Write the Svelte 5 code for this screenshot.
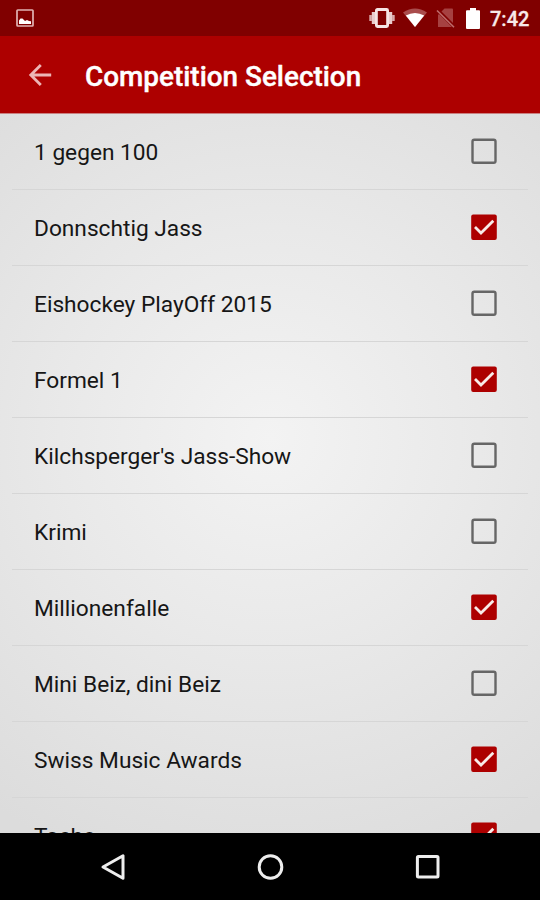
<script>
	let competitions = [
		{ name: '1 gegen 100', checked: false },
		{ name: 'Donnschtig Jass', checked: true },
		{ name: 'Eishockey PlayOff 2015', checked: false },
		{ name: 'Formel 1', checked: true },
		{ name: "Kilchsperger's Jass-Show", checked: false },
		{ name: 'Krimi', checked: false },
		{ name: 'Millionenfalle', checked: true },
		{ name: 'Mini Beiz, dini Beiz', checked: false },
		{ name: 'Swiss Music Awards', checked: true },
		{ name: 'Tacho', checked: true }
	];

	function toggle(i) {
		competitions[i].checked = !competitions[i].checked;
	}
</script>

<div class="screen">
	<div class="status">
		<svg class="picture" width="18" height="18" viewBox="0 0 18 18">
			<rect x="1" y="1" width="16" height="16" rx="0.8" fill="none" stroke="#e0b3b3" stroke-width="1.7" />
			<path d="M3 15v-3.5l1.5-2h2l2.5 2.5 2-1 2 1 2 .3V15z" fill="#fff" />
		</svg>
		<div class="tray">
			<svg width="28" height="20" viewBox="0 0 28 20">
				<rect x="8.4" y="1.5" width="11.2" height="17" rx="1" fill="none" stroke="#f5e4e4" stroke-width="2.8" />
				<path d="M5.4 4v12M22.6 4v12" stroke="#e9cccc" stroke-width="3.2" />
				<path d="M2.6 7v6M25.4 7v6" stroke="#d9aaaa" stroke-width="2.6" />
			</svg>
			<svg width="24" height="20" viewBox="0 0 24 20">
				<path d="M0 4.5Q12-3.5 24 4.5L12 19z" fill="#a94c4c" />
				<path d="M2.8 7.6Q12 2.6 21.2 7.6L12 19z" fill="#fff" />
			</svg>
			<svg width="20" height="20" viewBox="0 0 20 20">
				<path d="M8.5.5H16q1 0 1 1V19H2V7z" fill="#a64141" />
				<path d="M1 1.5L19 19.5" stroke="#800000" stroke-width="3.6" />
				<path d="M1 2.5L18 19.2" stroke="#bd6c6c" stroke-width="1.6" />
			</svg>
			<svg width="14" height="21" viewBox="0 0 14 21">
				<path d="M4 0h6v2.2h3q1 0 1 1V20q0 1-1 1H1q-1 0-1-1V3.2q0-1 1-1h3z" fill="#fff" />
			</svg>
			<span class="time">7:42</span>
		</div>
	</div>

	<header>
		<svg width="24" height="24" viewBox="0 0 24 24" fill="none" stroke="#edb5b5" stroke-width="2.8">
			<path d="M23.2 12H2.6M12.8 2l-10 10 10 10" />
		</svg>
		<h1>Competition Selection</h1>
	</header>

	<ul>
		{#each competitions as competition, i}
			<li>
				<button on:click={() => toggle(i)}>
					<span class="name">{competition.name}</span>
					<svg class="box" width="26" height="26" viewBox="0 0 26 26">
						{#if competition.checked}
							<rect x="0.2" y="0.5" width="25.6" height="25.5" rx="2" fill="#ad0000" />
							<path d="M4 13.1l6 6L22.3 6.8" fill="none" stroke="#f8ebe8" stroke-width="2.8" />
						{:else}
							<rect x="1.5" y="1.8" width="23" height="23" rx="1.8" fill="none" stroke="#666" stroke-width="2.4" />
						{/if}
					</svg>
				</button>
			</li>
		{/each}
	</ul>

	<nav>
		<svg width="28" height="28" viewBox="0 0 28 28">
			<path d="M24 2.7v22.6L4 14z" />
		</svg>
		<svg width="28" height="28" viewBox="0 0 28 28">
			<circle cx="13.5" cy="14" r="11.3" />
		</svg>
		<svg width="28" height="28" viewBox="0 0 28 28">
			<rect x="3.4" y="3.5" width="20.6" height="20.6" rx="1" />
		</svg>
	</nav>
</div>

<style>
	:global(body) {
		margin: 0;
	}

	.screen {
		width: 540px;
		height: 900px;
		display: flex;
		flex-direction: column;
		overflow: hidden;
		font-family: Roboto, 'Liberation Sans', sans-serif;
		background: #000;
	}

	.status {
		height: 36px;
		flex: none;
		box-sizing: border-box;
		padding: 0 10px 0 16px;
		display: flex;
		align-items: center;
		justify-content: space-between;
		background: #800000;
	}

	.tray {
		display: flex;
		align-items: center;
	}

	.tray svg + svg {
		margin-left: 7px;
	}

	.tray svg:nth-child(3) {
		margin-left: 9px;
	}

	.tray svg:nth-child(4) {
		margin-left: 10px;
	}

	.time {
		width: 40px;
		margin: 2px 0 0 10px;
		font-size: 20px;
		font-weight: 500;
		line-height: 24px;
		white-space: nowrap;
		color: #f8eaea;
		-webkit-text-stroke: 0.3px #f8eaea;
	}

	header {
		height: 78px;
		flex: none;
		box-sizing: border-box;
		padding: 1px 28px 0;
		display: flex;
		align-items: center;
		background: #ad0000;
		border-bottom: 1px solid #c98080;
	}

	h1 {
		margin: 3px 0 0 33px;
		font-size: 27.9px;
		font-weight: 500;
		line-height: 36px;
		white-space: nowrap;
		color: #fff;
		-webkit-text-stroke: 0.4px #fff;
	}

	ul {
		height: 719px;
		flex: none;
		margin: 0;
		padding: 0;
		overflow: hidden;
		list-style: none;
		background: radial-gradient(circle at 50% 45%, #f3f3f3 0, #e9e9e9 210px, #dcdcdc 460px);
	}

	li {
		height: 76px;
		box-sizing: border-box;
		margin: 0 12px;
		border-bottom: 1px solid #d6d6d6;
	}

	button {
		width: 100%;
		height: 75px;
		padding: 0 31px 0 22px;
		display: flex;
		align-items: center;
		justify-content: space-between;
		border: 0;
		background: none;
		font: inherit;
		text-align: left;
	}

	.name {
		padding-top: 3px;
		font-size: 22.7px;
		line-height: 30px;
		white-space: nowrap;
		color: #161616;
	}

	.box {
		display: block;
		margin-bottom: 1px;
	}

	nav {
		flex: 1;
		padding: 0 98px 0 99px;
		display: flex;
		align-items: center;
		justify-content: space-between;
		background: #000;
	}

	nav svg {
		fill: none;
		stroke: #eee;
		stroke-width: 3;
		stroke-linejoin: round;
	}
</style>
